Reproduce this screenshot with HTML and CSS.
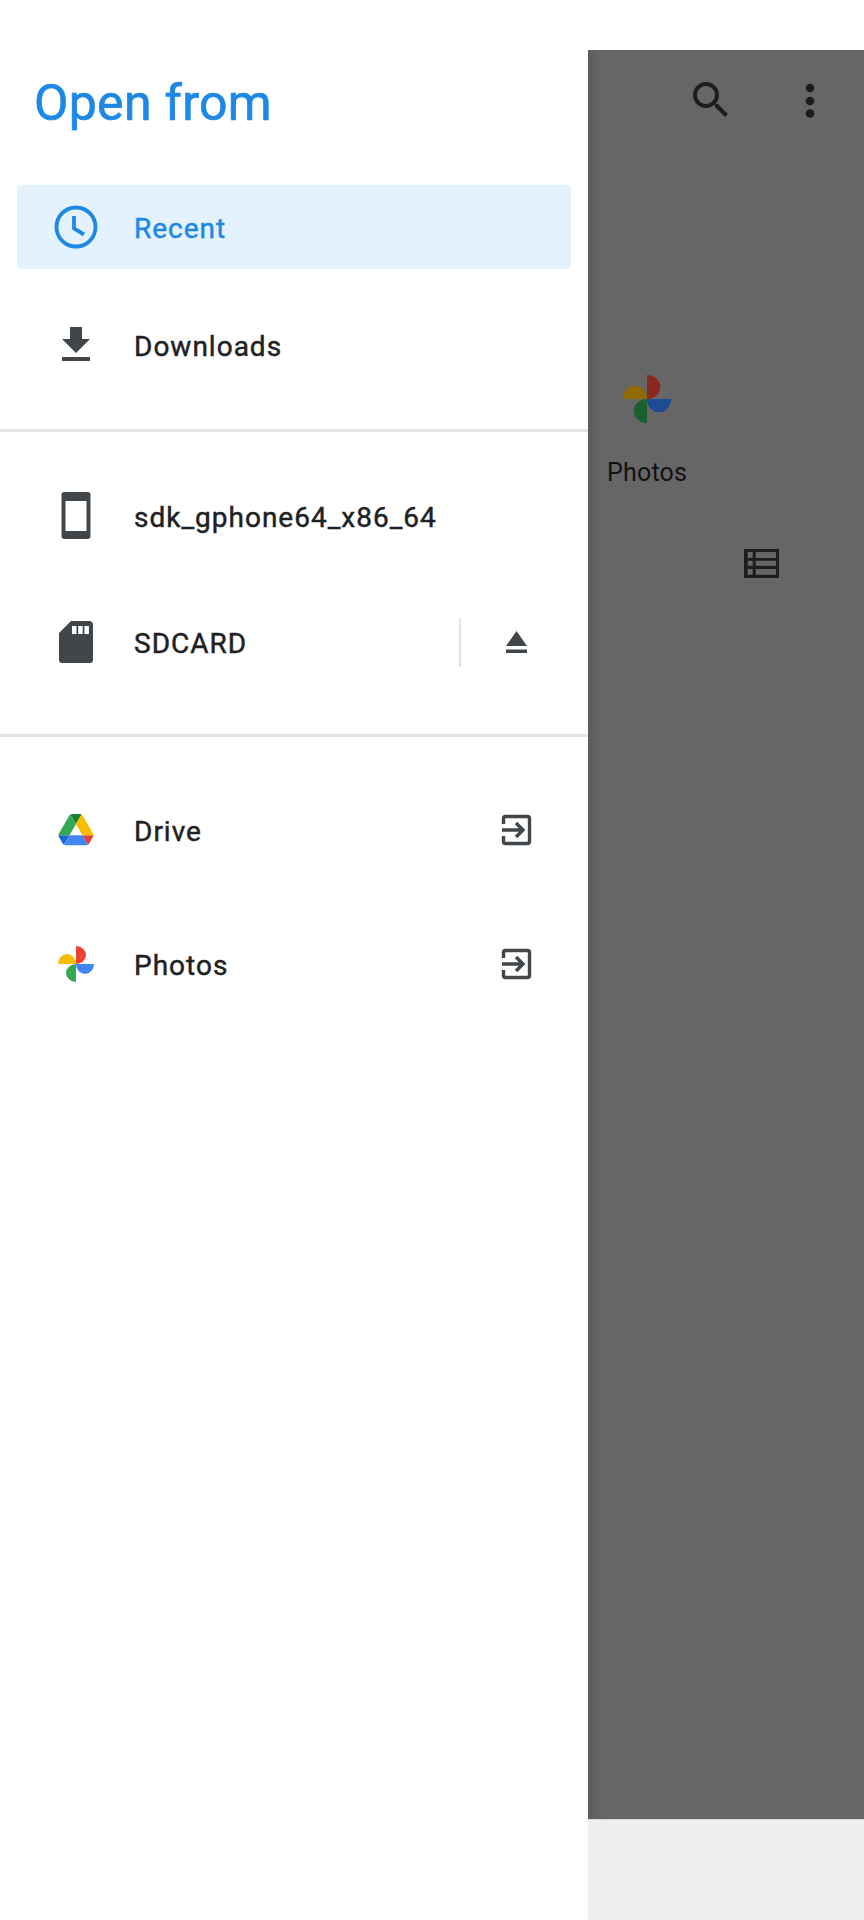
FILE: index.html
```html
<!DOCTYPE html>
<html lang="en">
<head>
  <meta charset="UTF-8" />
  <title>Open from</title>
  <link rel="stylesheet" href="styles.css">
</head>
<body>
  <aside class="drawer">
    <h1 class="drawer-title">Open from</h1>

    <nav class="section section-top">
      <div class="row row-selected">
        <svg class="icon" viewBox="0 0 48 48"><circle class="stroke-blue" cx="24" cy="24" r="19.5"/><path class="stroke-blue" d="M22 13v12.5l10 6"/></svg>
        <span class="row-label">Recent</span>
      </div>
      <div class="row">
        <svg class="icon icon-download" viewBox="0 0 24 24"><path class="fill-icon" d="M19 9h-4V3H9v6H5l7 7 7-7zM5 18v2h14v-2H5z"/></svg>
        <span class="row-label">Downloads</span>
      </div>
    </nav>

    <nav class="section section-device">
      <div class="row">
        <svg class="icon" viewBox="0 0 48 48"><path class="fill-icon" fill-rule="evenodd" d="M12.5 0h23a3 3 0 0 1 3 3v41a3 3 0 0 1-3 3h-23a3 3 0 0 1-3-3V3a3 3 0 0 1 3-3zM13.5 9v30h21V9z"/></svg>
        <span class="row-label">sdk_gphone64_x86_64</span>
      </div>
      <div class="row">
        <svg class="icon" viewBox="0 0 48 48"><path class="fill-icon" fill-rule="evenodd" d="M37 3H19L7 15v27a3 3 0 0 0 3 3h28a3 3 0 0 0 3-3V7a4 4 0 0 0-4-4zM20 8h4.5v8H20zM26.2 8h4.5v8h-4.5zM32.4 8h4.5v8h-4.5z"/></svg>
        <span class="row-label">SDCARD</span>
        <span class="row-sep"></span>
        <svg class="icon icon-end" viewBox="0 0 48 48"><path class="fill-icon" d="M24.5 13l10.500 15H14zM14 31.500h21V35H14z"/></svg>
      </div>
    </nav>

    <nav class="section section-apps">
      <div class="row">
        <svg class="icon" viewBox="0 0 48 48">
          <g transform="translate(6.5 8) scale(.4)">
            <path class="drive-darkblue" d="m6.6 66.85 3.85 6.65c.8 1.4 1.95 2.5 3.3 3.3l13.75-23.8h-27.5c0 1.55.4 3.1 1.2 4.5z"/>
            <path class="drive-green" d="m43.65 25-13.75-23.8c-1.35.8-2.5 1.9-3.3 3.3l-25.4 44a9.06 9.06 0 0 0 -1.2 4.5h27.5z"/>
            <path class="drive-red" d="m73.55 76.8c1.35-.8 2.5-1.9 3.3-3.3l1.6-2.75 7.65-13.25c.8-1.4 1.2-2.95 1.2-4.5h-27.502l5.852 11.5z"/>
            <path class="drive-darkgreen" d="m43.65 25 13.75-23.8c-1.35-.8-2.9-1.2-4.5-1.2h-18.5c-1.6 0-3.15.45-4.5 1.2z"/>
            <path class="drive-blue" d="m59.8 53h-32.3l-13.75 23.8c1.35.8 2.9 1.2 4.5 1.2h50.8c1.6 0 3.15-.45 4.5-1.2z"/>
            <path class="drive-yellow" d="m73.4 26.5-12.7-22c-.8-1.4-1.95-2.5-3.3-3.3l-13.75 23.8 16.15 28h27.45c0-1.55-.4-3.1-1.2-4.5z"/>
          </g>
        </svg>
        <span class="row-label">Drive</span>
        <svg class="icon icon-end" viewBox="0 0 48 48"><path class="stroke-icon" d="M11.5 18v-5.500a2 2 0 0 1 2-2h22a2 2 0 0 1 2 2v23a2 2 0 0 1-2 2h-22a2 2 0 0 1-2-2V30M10 24h20M24 17l7 7-7 7"/></svg>
      </div>
      <div class="row">
        <svg class="icon" viewBox="0 0 48 48">
          <path class="pin-red" d="M24 24V6a10 9 0 0 1 0 18z"/>
          <path class="pin-blue" d="M24 24h18a9 10 0 0 1-18 0z"/>
          <path class="pin-green" d="M24 24v18a10 9 0 0 1 0-18z"/>
          <path class="pin-yellow" d="M24 24H6a9 10 0 0 1 18 0z"/>
        </svg>
        <span class="row-label">Photos</span>
        <svg class="icon icon-end" viewBox="0 0 48 48"><path class="stroke-icon" d="M11.500 18v-5.500a2 2 0 0 1 2-2h22a2 2 0 0 1 2 2v23a2 2 0 0 1-2 2h-22a2 2 0 0 1-2-2V30M10 24h20M24 17l7 7-7 7"/></svg>
      </div>
    </nav>
  </aside>

  <main class="behind">
    <div class="statusbar"></div>

    <div class="scrim">
      <div class="actions">
        <svg class="icon" viewBox="0 0 24 24"><path class="fill-dark" d="M15.500 14h-.79l-.28-.27C15.410 12.590 16 11.110 16 9.500 16 5.910 13.090 3 9.500 3S3 5.910 3 9.500 5.910 16 9.500 16c1.610 0 3.090-.59 4.230-1.570l.27.28v.79l5 4.990L20.490 19l-4.990-5zm-6 0C7.010 14 5 11.990 5 9.500S7.010 5 9.500 5 14 7.010 14 9.500 11.990 14 9.500 14z"/></svg>
        <svg class="icon" viewBox="0 0 48 48"><circle class="fill-dark" cx="24" cy="12" r="4.300"/><circle class="fill-dark" cx="24" cy="25" r="4.300"/><circle class="fill-dark" cx="24" cy="37.500" r="4.300"/></svg>
      </div>

      <div class="tile">
        <svg class="icon tile-icon" viewBox="0 0 48 48">
          <path class="dim-red" d="M24 24V0a13.300 12 0 0 1 0 24z"/>
          <path class="dim-blue" d="M24 24h24a12 13.300 0 0 1-24 0z"/>
          <path class="dim-green" d="M24 24v24a13.300 12 0 0 1 0-24z"/>
          <path class="dim-yellow" d="M24 24H0a12 13.300 0 0 1 24 0z"/>
        </svg>
        <span class="tile-label">Photos</span>
      </div>

      <svg class="list-toggle" viewBox="0 0 35 29"><path class="fill-dark" fill-rule="evenodd" d="M0 0h35v29H0zM3.700 3v6h5V3zM11.700 3v6H32V3zM3.700 11.700v5h5v-5zM11.700 11.700v5H32v-5zM3.700 20v5.700h5V20zM11.700 20v5.700H32V20z"/></svg>
    </div>

    <div class="bottombar"></div>
  </main>
</body>
</html>
```

FILE: styles.css
```css
* {
  box-sizing: border-box;
}

body {
  margin: 0;
  width: 864px;
  height: 1920px;
  display: flex;
  font-family: Roboto, sans-serif;
  background: white;
  overflow: hidden;
}

.drawer {
  width: 588px;
  flex-shrink: 0;
  background: white;
}

.drawer-title {
  margin: 0;
  height: 185px;
  padding: 73px 0 0 34px;
  font-size: 50px;
  line-height: 60px;
  font-weight: 400;
  letter-spacing: 0.3px;
  -webkit-text-stroke: 0.7px #1e88e5;
  color: #1e88e5;
}

.section {
  display: flex;
  flex-direction: column;
  border-bottom: 3px solid #e4e4e4;
}

.section-top {
  gap: 34px;
  height: 247px;
}

.section-device {
  gap: 42px;
  padding-top: 42px;
  height: 305px;
}

.section-apps {
  gap: 50px;
  padding-top: 51px;
  border-bottom: none;
}

.row {
  height: 84px;
  margin: 0 17px;
  padding-left: 35px;
  padding-right: 31px;
  display: flex;
  align-items: center;
  border-radius: 4px;
}

.row-selected {
  background: #e3f2fd;
}

.row-selected .row-label {
  color: #1e88e5;
  -webkit-text-stroke-color: #1e88e5;
}

.row-label {
  margin-left: 34px;
  padding-top: 2px;
  flex: 1;
  font-size: 28px;
  font-weight: 400;
  letter-spacing: 1px;
  -webkit-text-stroke: 0.45px #202124;
  color: #202124;
}

.row-sep {
  width: 2px;
  height: 49px;
  background: #e2e2e2;
}

.icon {
  width: 48px;
  height: 48px;
  flex-shrink: 0;
}

.icon-end {
  margin-left: 31px;
}

.stroke-blue {
  fill: none;
  stroke: #1e88e5;
  stroke-width: 3.8;
}

.stroke-icon {
  fill: none;
  stroke: #41464b;
  stroke-width: 3.4;
}

.fill-icon {
  fill: #41464b;
}

.fill-dark {
  fill: #1b1d1f;
}

.drive-darkblue { fill: #1967d2; }
.drive-green { fill: #34a853; }
.drive-red { fill: #ea4335; }
.drive-darkgreen { fill: #188038; }
.drive-blue { fill: #4285f4; }
.drive-yellow { fill: #fbbc04; }

.pin-red { fill: #ea4335; }
.pin-blue { fill: #4285f4; }
.pin-green { fill: #34a853; }
.pin-yellow { fill: #fbbc04; }

.dim-red { fill: #8a2720; }
.dim-blue { fill: #1f4a94; }
.dim-green { fill: #1a5f30; }
.dim-yellow { fill: #8f6b02; }

.behind {
  flex: 1;
  display: flex;
  flex-direction: column;
}

.statusbar {
  height: 50px;
  background: white;
}

.scrim {
  flex: 1;
  background: linear-gradient(to right, #5c5c5c, #666 14px);
}

.bottombar {
  height: 101px;
  background: #eee;
  border-top: 1px solid #d8d8d8;
}

.actions {
  display: flex;
  justify-content: flex-end;
  gap: 51px;
  padding: 26px 30px 0 0;
}

.tile {
  display: flex;
  flex-direction: column;
  align-items: flex-start;
  margin: 251px 0 0 19px;
}

.tile-icon {
  margin-left: 16px;
}

.tile-label {
  margin-top: 35px;
  font-size: 25px;
  line-height: 30px;
  letter-spacing: 0.2px;
  color: #111;
}

.list-toggle {
  display: block;
  width: 35px;
  height: 29px;
  margin: 61px 0 0 156px;
}
```
